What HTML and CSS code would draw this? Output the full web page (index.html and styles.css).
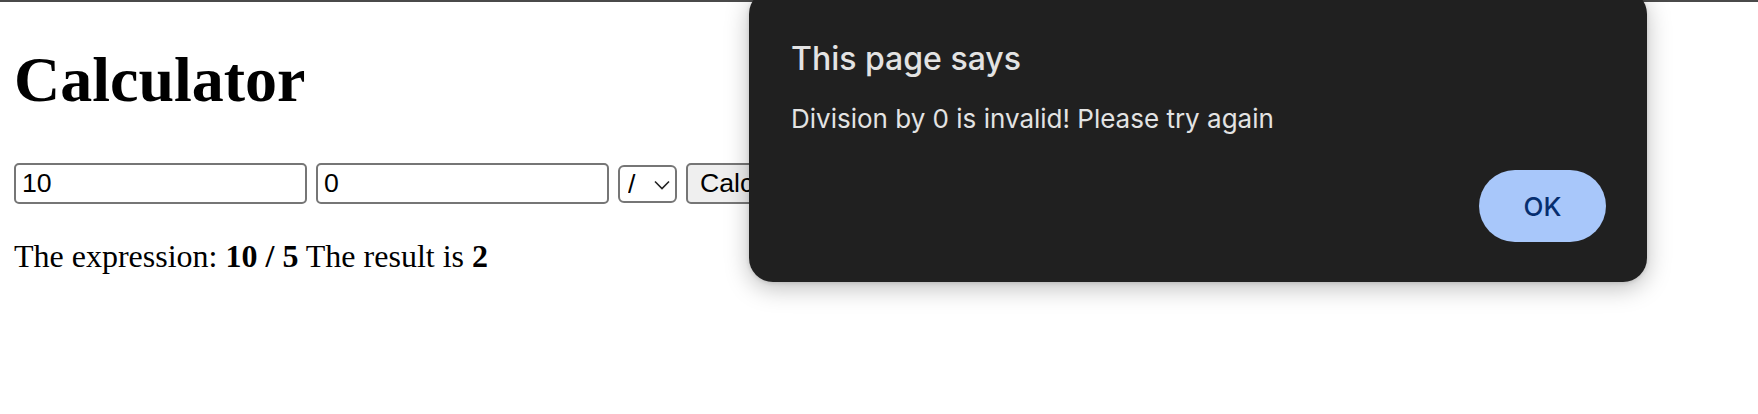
FILE: index.html
```html
<!DOCTYPE html>
<html lang="en">
<head>
<meta charset="utf-8">
<title>Calculator</title>
<link rel="stylesheet" href="styles.css">
</head>
<body>
<div class="topbar"></div>
<main class="page">
  <h1 class="title">Calculator</h1>
  <form class="calc-row" onsubmit="return false">
    <input class="field" type="text" value="10">
    <input class="field" type="text" value="0">
    <span class="select-wrap">
      <select class="op">
        <option>/</option>
      </select>
      <svg class="chev" width="16" height="10" viewBox="0 0 16 10" aria-hidden="true"><path d="M1 1.5 L8 8.5 L15 1.5" fill="none" stroke="#222" stroke-width="1.6"/></svg>
    </span>
    <button class="btn" type="button">Calculate</button>
  </form>
  <p class="result">The expression: <b>10 / 5</b> The result is <b>2</b></p>
</main>
<div class="dialog" role="alertdialog">
  <h2 class="dialog-title">This page says</h2>
  <p class="dialog-msg">Division by 0 is invalid! Please try again</p>
  <div class="dialog-actions">
    <button class="ok" type="button">OK</button>
  </div>
</div>
</body>
</html>
```
FILE: styles.css
```css
html, body {
  margin: 0;
  padding: 0;
  background: #ffffff;
}
body {
  font-family: "Liberation Serif", "Times New Roman", serif;
  color: #000;
  overflow: hidden;
  height: 414px;
  position: relative;
}
.topbar {
  height: 2px;
  background: #4a4a4a;
}
.page {
  padding: 0 14px;
}
.title {
  margin: 41px 0 0;
  font-size: 64px;
  line-height: 74px;
  font-weight: 700;
}
.calc-row {
  margin-top: 46px;
  display: flex;
  align-items: center;
  gap: 9px;
  height: 41px;
}
.field {
  box-sizing: border-box;
  width: 293px;
  height: 41px;
  border: 2px solid #767676;
  border-radius: 5px;
  padding: 2px 4px 2px 6px;
  margin: 0;
  font-family: "Liberation Sans", Arial, sans-serif;
  font-size: 26.67px;
  color: #000;
  background: #fff;
  outline: none;
}
.select-wrap {
  position: relative;
  display: block;
  width: 59px;
  height: 38px;
}
.op {
  -webkit-appearance: none;
  appearance: none;
  box-sizing: border-box;
  width: 59px;
  height: 38px;
  margin: 0;
  border: 2px solid #767676;
  border-radius: 6px;
  padding: 0 0 0 8px;
  font-family: "Liberation Sans", Arial, sans-serif;
  font-size: 26.67px;
  color: #000;
  background: #fff;
}
.chev {
  position: absolute;
  left: 36px;
  top: 15px;
  pointer-events: none;
}
.btn {
  box-sizing: border-box;
  height: 41px;
  margin: 0;
  padding: 2px 12px;
  border: 2px solid #767676;
  border-radius: 5px;
  background: #efefef;
  font-family: "Liberation Sans", Arial, sans-serif;
  font-size: 26.67px;
  color: #000;
}
.result {
  margin: 34px 0 0;
  font-size: 32px;
  line-height: 37px;
}
.result b {
  font-weight: 700;
}

/* Alert dialog overlay */
.dialog {
  position: absolute;
  left: 749px;
  top: -10px;
  width: 898px;
  height: 292px;
  box-sizing: border-box;
  padding: 49px 41px 40px 42px;
  background: #202020;
  border-radius: 24px;
  box-shadow: 0 6px 24px rgba(0, 0, 0, 0.26), 0 1px 4px rgba(0, 0, 0, 0.12);
  display: flex;
  flex-direction: column;
  font-family: Inter, "Noto Sans", sans-serif;
  color: #e3e3e3;
  z-index: 2;
}
.dialog-title {
  margin: 0;
  font-size: 32px;
  line-height: 40px;
  font-weight: 500;
  color: #e3e3e3;
}
.dialog-msg {
  margin: 24px 0 0;
  font-size: 26px;
  line-height: 32px;
  font-weight: 400;
  color: #e3e3e3;
}
.dialog-actions {
  margin-top: auto;
  display: flex;
  justify-content: flex-end;
}
.ok {
  width: 127px;
  height: 72px;
  border: none;
  border-radius: 36px;
  background: #a8c7fa;
  color: #062e6f;
  font-family: Inter, "Noto Sans", sans-serif;
  font-size: 26px;
  font-weight: 500;
  padding: 0;
}
```
